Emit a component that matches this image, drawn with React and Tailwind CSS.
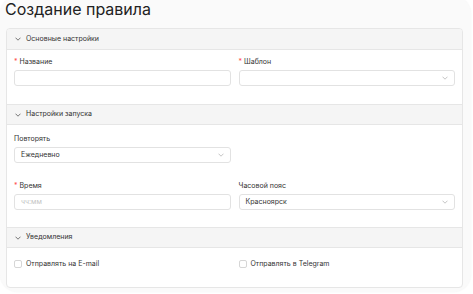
const Chevron = ({ className = '', color = '#b5b5b5' }) => (
  <svg width="6" height="4" viewBox="0 0 6 4" className={className} fill="none">
    <polyline points="0.5,0.7 3,3.2 5.5,0.7" stroke={color} strokeWidth="0.8" />
  </svg>
);

const Label = ({ children, required }) => (
  <div className="flex h-[10px] items-center text-[7px] leading-[10px] text-[#333]">
    {required && <span className="mr-[2px] text-[#ff4d4f]">*</span>}
    {children}
  </div>
);

const Input = ({ placeholder }) => (
  <div className="mt-[3px] flex h-[16px] items-center rounded-[3px] border border-[#e2e2e2] bg-white px-[6px] text-[7px] text-[#c4c4c4]">
    {placeholder}
  </div>
);

const Select = ({ value }) => (
  <div className="mt-[3px] flex h-[16px] items-center justify-between rounded-[3px] border border-[#e2e2e2] bg-white pl-[6px] pr-[6px] text-[7px] text-[#333]">
    <span>{value}</span>
    <Chevron />
  </div>
);

const SectionHeader = ({ title, first }) => (
  <div
    className={
      'flex h-[21px] items-center gap-[5px] border-b border-[#e6e6e6] bg-[#f5f5f5] pl-[8px] text-[7px] text-[#333] ' +
      (first ? '' : 'border-t')
    }
  >
    <Chevron color="#555" />
    <span>{title}</span>
  </div>
);

const Checkbox = ({ label }) => (
  <div className="flex h-[10px] items-center gap-[4px] text-[7px] text-[#333]">
    <span className="h-[8px] w-[8px] rounded-[2px] border border-[#d6d6d6] bg-white" />
    <span>{label}</span>
  </div>
);

export default function App() {
  return (
    <div className="h-[294px] w-[473px] overflow-hidden bg-white" style={{ fontFamily: 'Inter, "Noto Sans", sans-serif' }}>
      <div className="-mt-[4px] h-[296px] w-[471px] rounded-[18px] bg-[#fafafa] pl-[6px] pr-[8px] pt-[3px] shadow-[0_0_2px_rgba(0,0,0,0.05)]">
        <h1 className="-ml-px text-[16px] font-normal leading-[20px] text-[#222]">Создание правила</h1>
        <div className="mt-[9px] overflow-hidden rounded-[4px] border border-[#e6e6e6] bg-white">
          <SectionHeader title="Основные настройки" first />
          <div className="grid grid-cols-2 gap-x-[8px] px-[7px] pb-[18px] pt-[7px]">
            <div>
              <Label required>Название</Label>
              <Input />
            </div>
            <div>
              <Label required>Шаблон</Label>
              <Select value="" />
            </div>
          </div>

          <SectionHeader title="Настройки запуска" />
          <div className="grid grid-cols-2 gap-x-[8px] gap-y-[18px] px-[7px] pb-[17px] pt-[9px]">
            <div>
              <Label>Повторять</Label>
              <Select value="Ежедневно" />
            </div>
            <div />
            <div>
              <Label required>Время</Label>
              <Input placeholder="чч:мм" />
            </div>
            <div>
              <Label>Часовой пояс</Label>
              <Select value="Красноярск" />
            </div>
          </div>

          <SectionHeader title="Уведомления" />
          <div className="grid grid-cols-2 gap-x-[8px] px-[7px] pb-[18px] pt-[11px]">
            <Checkbox label="Отправлять на E-mail" />
            <Checkbox label="Отправлять в Telegram" />
          </div>
        </div>
      </div>
    </div>
  );
}
